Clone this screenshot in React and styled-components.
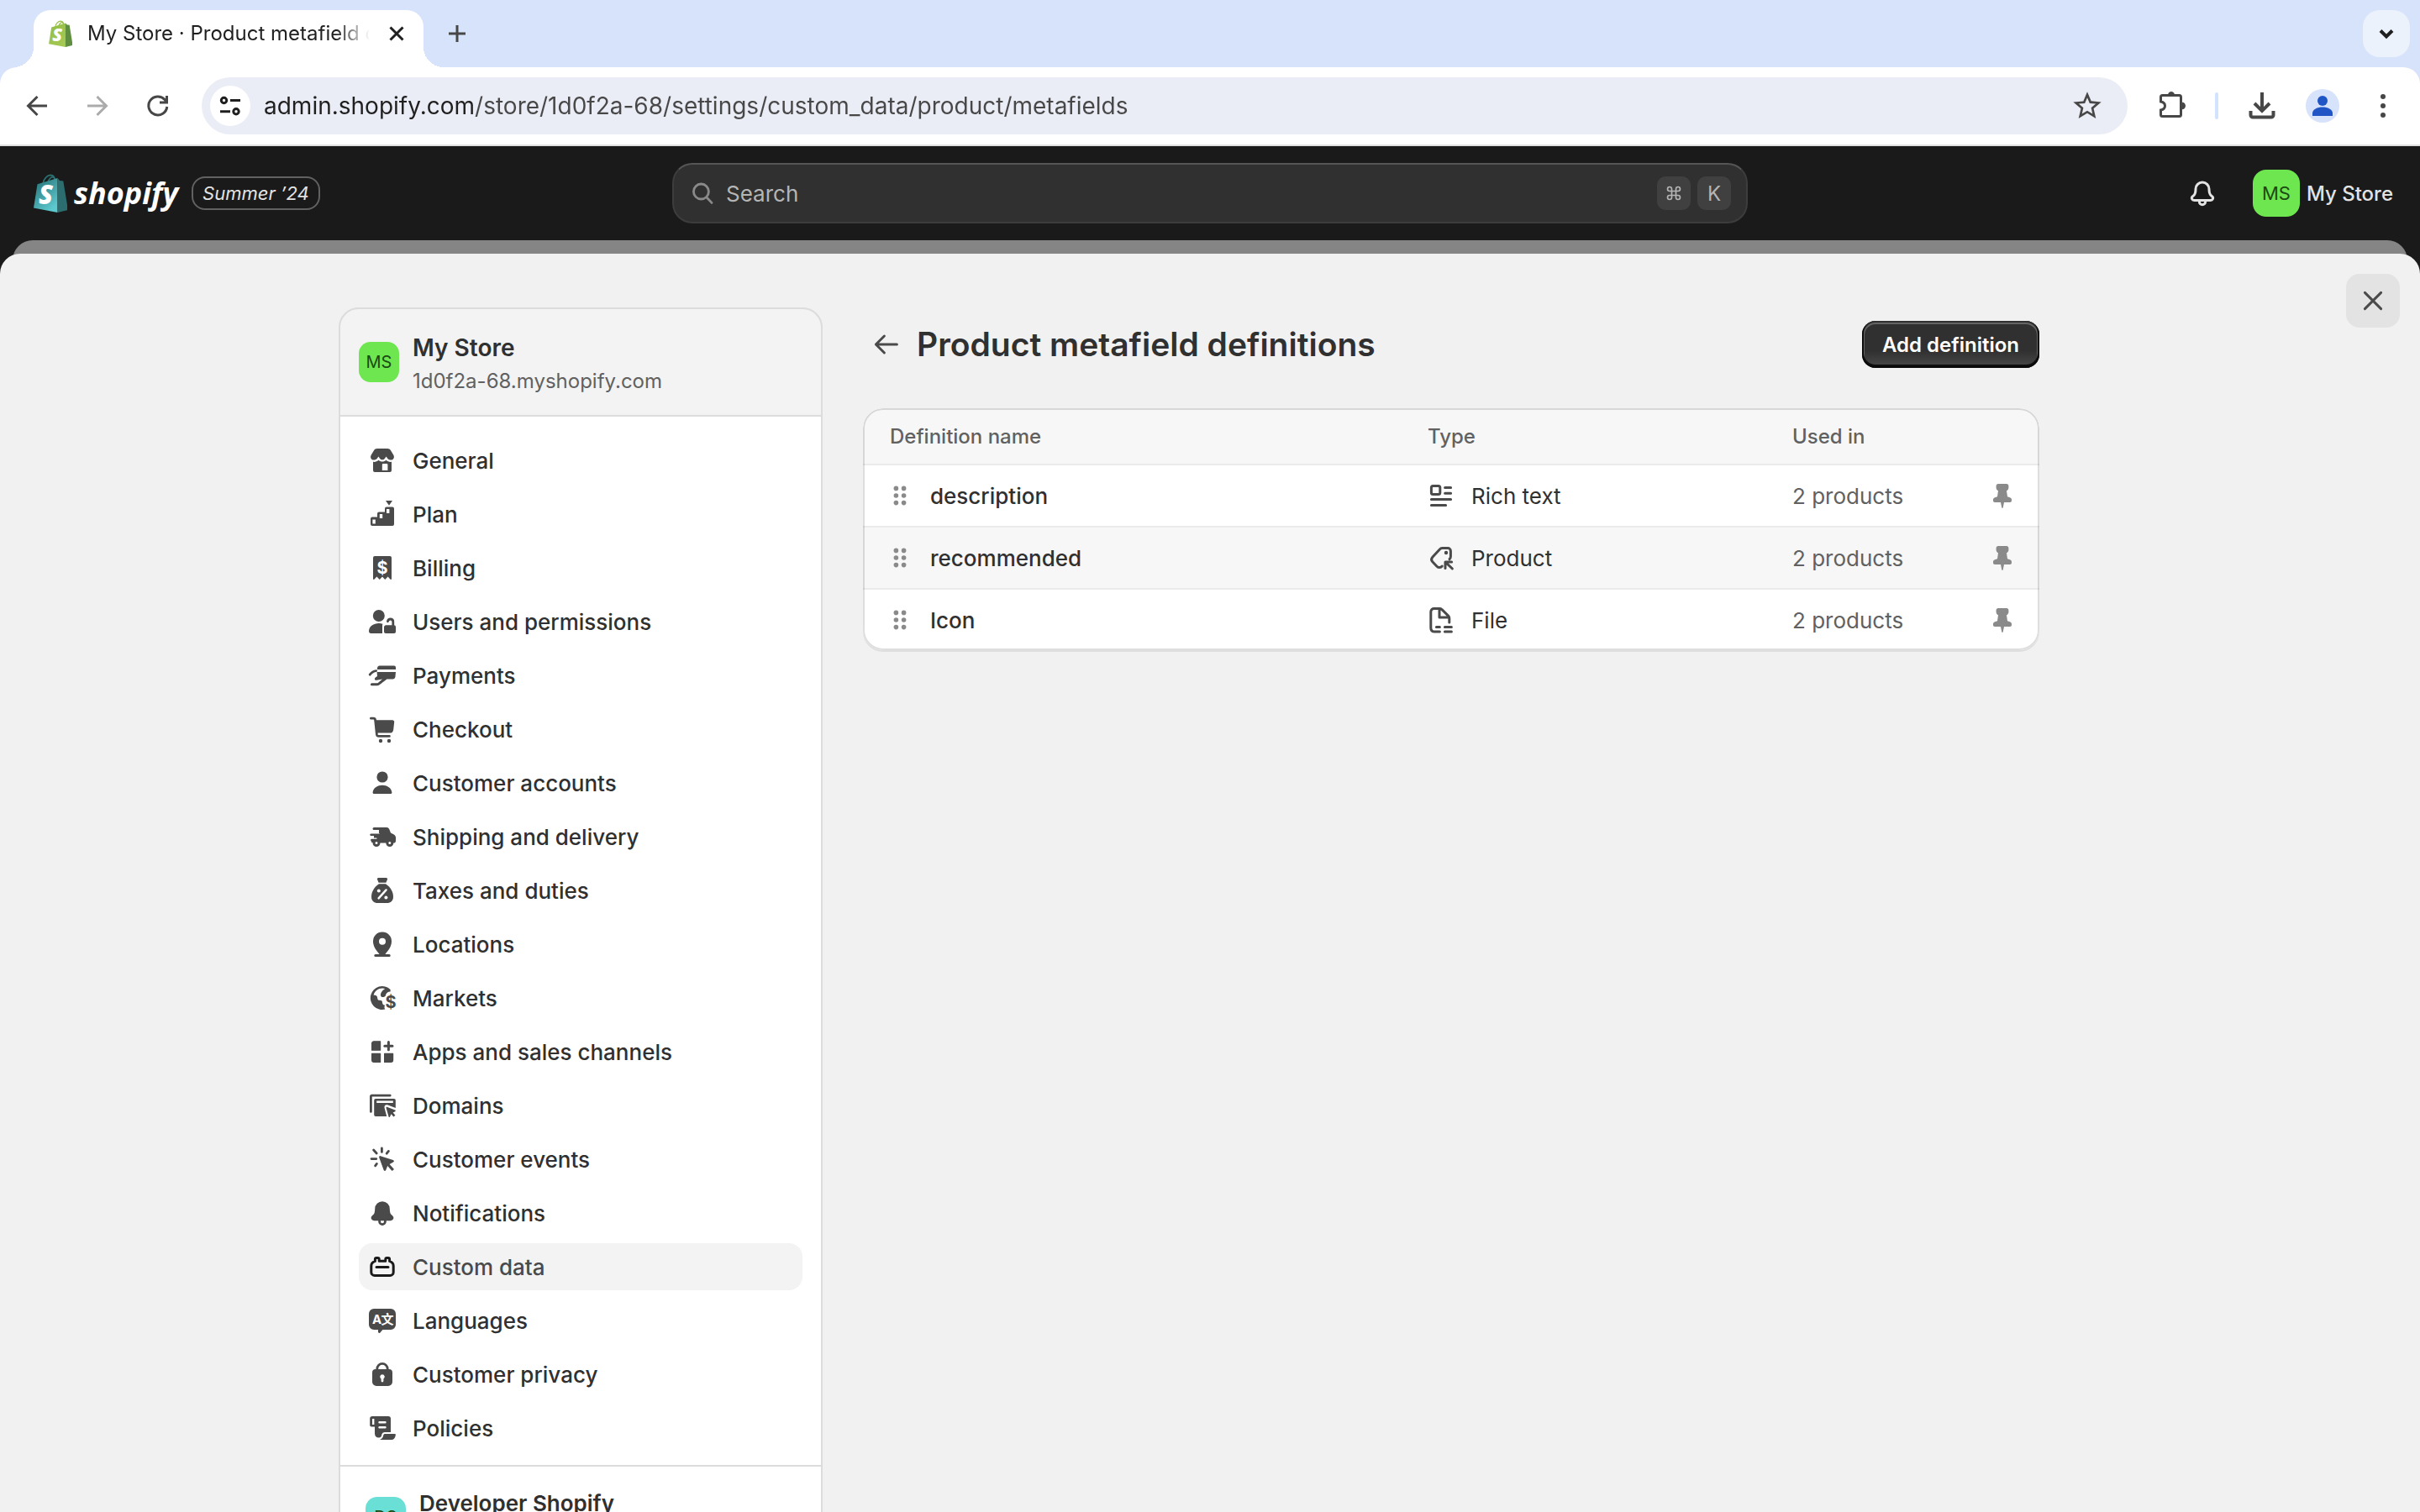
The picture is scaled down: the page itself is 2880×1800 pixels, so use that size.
import React, { useState } from 'react';
import styled, { createGlobalStyle } from 'styled-components';
import { Command } from 'lucide-react';
import { MdStarBorder } from 'react-icons/md';

const GlobalStyle = createGlobalStyle`
    * {
        box-sizing: border-box;
    }
    body {
        margin: 0;
        overflow: hidden;
        background-color: #1a1a1a;
        font-family: Inter, 'Liberation Sans', sans-serif;
        font-size: 26px;
        color: #303030;
    }
    button, input {
        font: inherit;
        color: inherit;
    }
    button {
        display: flex;
        align-items: center;
        justify-content: center;
        flex-shrink: 0;
        padding: 0;
        border: none;
        background: none;
        cursor: pointer;
    }
    a {
        color: inherit;
        text-decoration: none;
    }
    svg {
        display: block;
        flex-shrink: 0;
    }
`;

const Icon = ({ children, ...rest }) => (
    <svg width="40" height="40" viewBox="0 0 20 20" fill="currentColor" aria-hidden="true" {...rest}>
        {children}
    </svg>
);

const Line = ({ d, w = 1.5, color = 'currentColor' }) => (
    <path d={d} fill="none" stroke={color} strokeWidth={w} strokeLinecap="round" strokeLinejoin="round" />
);

// toolbar glyphs are drawn on a 40 unit grid
const Glyph = ({ children }) => (
    <svg width="40" height="40" viewBox="0 0 40 40" fill="none" stroke="currentColor" strokeWidth="3" aria-hidden="true">
        {children}
    </svg>
);

const Bag = ({ width, height, front, side, handle, id }) => (
    <svg width={width} height={height} viewBox="0 0 40 46" aria-hidden="true">
        <defs>
            <linearGradient id={id} x1="0" y1="0" x2="0.6" y2="1">
                <stop offset="0.2" stopColor={front[0]} />
                <stop offset="1" stopColor={front[1]} />
            </linearGradient>
        </defs>
        <path d="M11 12C12 5 17 1.500 20 1.500c4 0 5.500 4 5.500 8M17 10c1-4 4-6.500 6-6 3 .7 3 3.500 3 5" fill="none" stroke={handle} strokeWidth="1.800" />
        <path d="M4.500 12.300 28.500 5v41L0 40.500z" fill={`url(#${id})`} />
        <path d="M28.500 5l2.500 3 4.300.4L41 43l-12.500 3z" fill={side} />
        <text x="6" y="36" fontFamily="Open Sans" fontWeight="800" fontStyle="italic" fontSize="31" fill="#fff">S</text>
    </svg>
);

const BellShape = "M6 7.500a4 4 0 0 1 8 0c0 2 .4 3.200 1.100 3.800l.6.500c1.200 1 .5 2.400-.9 2.400H5.200c-1.400 0-2.100-1.400-.9-2.400l.6-.5C5.600 10.700 6 9.500 6 7.500z";

const icons = {
    General: (
        <>
            <path d="M7 3h6c.9 0 1.600.4 2 1.100l1.600 2.600c.9 1.500 0 3.100-1.500 3.100-.9 0-1.600-.4-2.100-1.100l-.7-1-.7 1c-.8 1.300-2.400 1.300-3.200 0l-.7-1-.7 1C6.500 9.400 5.800 9.800 4.900 9.800c-1.500 0-2.400-1.600-1.500-3.100L5 4.100C5.400 3.400 6.100 3 7 3z" />
            <path fillRule="evenodd" d="M4.500 10.900c1.200.2 2.300-.1 3.200-1 1.300 1.200 3.300 1.200 4.600 0 .9.900 2 1.200 3.200 1V16a1 1 0 0 1-1 1h-9a1 1 0 0 1-1-1zM10.500 12a.6.600 0 0 0-.6.600V16h3.300v-3.400a.6.600 0 0 0-.6-.6z" />
        </>
    ),
    Plan: (
        <>
            <path d="M12 2h4l-2 2.900z" />
            <path fillRule="evenodd" d="M3 12.800a1 1 0 0 1 1-1h3V9.700a1 1 0 0 1 1-1h3.500v-2a1 1 0 0 1 1-1H16a1 1 0 0 1 1 1V16a1 1 0 0 1-1 1H4a1 1 0 0 1-1-1zM4.200 13.200v2.500h1.700v-2.500zM8.400 10v2.500h1.700V10zM12.500 7v2.500h1.700V7z" />
        </>
    ),
    Billing: (
        <>
            <path d="M4.500 4a1 1 0 0 1 1-1h9a1 1 0 0 1 1 1v12.500c0 .5-.5.700-.8.300l-1.400-1.500-1.700 1.700-1.600-1.700L8.400 17l-1.700-1.700-1.400 1.500c-.3.400-.8.200-.8-.3z" />
            <text x="10" y="13.300" fontSize="10" fontWeight="700" textAnchor="middle" fill="#fff">$</text>
        </>
    ),
    'Users and permissions': (
        <>
            <circle cx="7.900" cy="6.500" r="3.500" />
            <path d="M2 15.800C2 12.700 5 11 7.800 11c1 0 1.700.1 2.400.4-.2.500-.2 1-.2 1.600v4H3.200C2.500 17 2 16.500 2 15.800z" />
            <path d="M12.200 12.100H17a1 1 0 0 1 1 1V16a1 1 0 0 1-1 1h-5a1 1 0 0 1-1-1v-2.700c0-.7.500-1.200 1.200-1.200z" />
            <Line d="M13.200 9.900c.2-1 .8-1.400 1.600-1.400 1 0 1.600.7 1.600 1.600V12" w="1.400" />
        </>
    ),
    Payments: (
        <>
            <path d="M8.300 4.200H17a1 1 0 0 1 1 1v1.300H6.900l.2-1.200c.1-.6.600-1.100 1.200-1.100zM6.800 8H18l-.3 3a1.400 1.400 0 0 1-1.400 1.200h-3.600C11 13.500 9.300 14.900 8.300 15.600c-.4.300-.9.500-1.500.5H3.700a.75.750 0 0 1 0-1.500h2.800c.5 0 .8-.1 1.200-.4l2.300-1.900-3.400.6c-1.300.2-1.500-1.200-.5-1.800L7 10.500z" />
            <Line d="M2.600 9.600C3.800 8 4.800 7.400 6.300 7.300" w="1.400" />
        </>
    ),
    Checkout: (
        <>
            <path d="M5.700 4.600H16c.7 0 1.100.5 1.100 1.100l-.5 4.500a2.300 2.300 0 0 1-2.300 2.100H6.400z" />
            <Line d="M3.200 3.600h1.500c.6 0 1 .3 1.100 1l.9 8.600c.1.700.4 1 1.100 1h6.400" w="1.400" />
            <circle cx="9" cy="17" r="1.100" />
            <circle cx="14" cy="17" r="1.100" />
        </>
    ),
    'Customer accounts': (
        <>
            <circle cx="10" cy="6.500" r="3.300" />
            <path d="M4.300 15.600c.4-2.700 3-4.200 5.700-4.200s5.300 1.500 5.700 4.200c.1.500-.3.900-.8.900H5.100c-.5 0-.9-.4-.8-.9z" />
        </>
    ),
    'Shipping and delivery': (
        <>
            <path d="M5 4.500h7.600c.7 0 1.200.4 1.500 1l.9 2.300 1.700.8c.8.400 1.300 1.100 1.300 2v1.900c0 .8-.5 1.300-1.300 1.300h-.4a2.100 2.100 0 0 0-3.900 0H8.500a2.200 2.200 0 0 0-4-.3H4l-.6-.3V12.200h3.300V10.700H5V9.500h3.500V8.100H8V6H5a.75.750 0 0 1 0-1.500z" />
            <Line d="M3.300 8.900h5M3.700 12h3" w="1.300" />
            <circle cx="6.500" cy="13.800" r="1.500" fill="#fff" stroke="currentColor" strokeWidth="1.500" />
            <circle cx="14.400" cy="13.800" r="1.500" fill="#fff" stroke="currentColor" strokeWidth="1.500" />
        </>
    ),
    'Taxes and duties': (
        <>
            <path d="M7.700 2.500h4.600c.6 0 .9.500.7 1l-.8 1.900H7.800L7 3.500c-.2-.5.100-1 .7-1z" />
            <path d="M8 6.100h4c2.700 1.700 4.500 4.700 4.500 7.600 0 2.300-1.500 3.800-3.800 3.800H7.300c-2.300 0-3.800-1.500-3.800-3.800 0-2.900 1.800-5.900 4.500-7.600z" />
            <Line d="M12.300 9.700l-4.500 5" w="1.200" color="#fff" />
            <circle cx="7.900" cy="10.300" r="1" fill="#fff" />
            <circle cx="12.200" cy="14.200" r="1" fill="#fff" />
        </>
    ),
    Locations: (
        <>
            <path fillRule="evenodd" d="M10 2.700a5.500 5.500 0 0 1 5.500 5.600c0 3-1.700 5.300-3.800 7.700h2.400a.75.750 0 0 1 0 1.500H5.900a.75.750 0 0 1 0-1.500h2.400C6.200 13.600 4.500 11.300 4.500 8.300A5.500 5.500 0 0 1 10 2.700zM10 6.400a2 2 0 1 0 0 4 2 2 0 0 0 0-4z" />
        </>
    ),
    Markets: (
        <>
            <path d="M14.800 5A7 7 0 1 0 11.700 16.800c-.4-.5-.6-1.100-.4-1.700l.2-.8c-.8 0-1.500-.6-1.500-1.600 0-1-.7-1.300-1.600-1.300-.8 0-1.300-.5-1.300-1.300C7.100 8.800 6 8.300 4.800 8.300 5.500 5.800 7.600 4.300 10 4.300c.6 0 1.100.1 1.600.2C10.300 5.300 9 6.800 9 8.200c0 1.200 1 1.500 2.100 1.200.7-.2.900-.8 1-1.400.3-1.100 1.300-1.700 2.700-1.800z" />
            <text x="15" y="15.800" fontSize="10" fontWeight="700" textAnchor="middle">$</text>
        </>
    ),
    'Apps and sales channels': (
        <>
            <path d="M5 3.900h3.800v5.200H3.800V5.100A1.200 1.200 0 0 1 5 3.900zM3.800 11.200h5v5H5a1.200 1.200 0 0 1-1.200-1.200zM11.300 11.200h5v3.800a1.200 1.200 0 0 1-1.200 1.200h-3.800z" strokeWidth=".6" stroke="currentColor" strokeLinejoin="round" />
            <Line d="M13.700 4.300v4.600M11.400 6.600H16" />
        </>
    ),
    Domains: (
        <>
            <Line d="M3.200 13.700V4.700c0-.4.200-.6.600-.6h10.800" w="1.400" />
            <path fillRule="evenodd" d="M6 6h11a.9.900 0 0 1 .9.900v4.600l-4.600-1.700c-1.400-.5-2.300.5-2 1.700l1.300 5H6a.9.900 0 0 1-.9-.9V6.900A.9.900 0 0 1 6 6zM6.600 7.300v1.200h9.800V7.300z" />
            <path d="M12.700 10.900l4.900 1.900c.4.200.4.600 0 .8l-1.300.6 1.400 1.700-1 .9-1.400-1.700-.8 1.700c-.2.400-.6.300-.7-.1l-1.500-5.200c-.1-.4.100-.7.400-.6z" />
        </>
    ),
    'Customer events': (
        <>
            <path d="M8.900 8.100l7.500 2.400c.7.200.7 1 .1 1.300l-2.200 1.200 2.700 3-1.200 1-2.700-3-1 2.500c-.3.700-1.100.6-1.300-.1L8.100 9c-.1-.6.300-1.100.8-.9z" />
            <Line d="M9.700 3.500v2.200M4.800 4.500l1.800 2M13.700 5.200l-1.100 1.400M3.500 9.800h2.900M6.700 12.700l-.9 1.200" w="1.400" />
        </>
    ),
    Notifications: (
        <>
            <path d={BellShape} stroke="currentColor" strokeWidth=".8" />
            <Line d="M8.300 14.500v.6a1.700 1.700 0 0 0 3.400 0v-.6" w="1.400" />
        </>
    ),
    'Custom data': (
        <Line d="M5.700 5.600c0-.5.300-.8.800-.8h.8c.5 0 .8.300.8.800v1h3.800v-1c0-.5.300-.8.800-.8h.8c.5 0 .8.300.8.800V6.700c1.200.4 2.300 1.400 2.300 2.800v3.700a2 2 0 0 1-2 2H5.400a2 2 0 0 1-2-2V9.500c0-1.400 1.100-2.400 2.300-2.800zM6.500 10.200h7" />
    ),
    Languages: (
        <>
            <path d="M5 3h10a3 3 0 0 1 3 3v6.500a3 3 0 0 1-3 3h-4.800l-1.500 1.700c-.4.500-1.200.2-1.200-.4v-1.300H5a3 3 0 0 1-3-3V6a3 3 0 0 1 3-3z" />
            <text x="4" y="11.800" fontSize="7.500" fontWeight="700" fill="#fff">A</text>
            <text x="9.200" y="12.200" fontSize="7.500" fontWeight="700" fontFamily="Noto Sans CJK SC, sans-serif" fill="#fff">文</text>
        </>
    ),
    'Customer privacy': (
        <>
            <path fillRule="evenodd" d="M6 7h8a2 2 0 0 1 2 2v5.500a2.500 2.500 0 0 1-2.500 2.500h-7A2.500 2.500 0 0 1 4 14.500V9a2 2 0 0 1 2-2zM10 10.100a1.400 1.400 0 0 0-.7 2.600V14a.7.700 0 0 0 1.400 0v-1.300a1.400 1.400 0 0 0-.7-2.600z" />
            <Line d="M6.900 8V6.800a3.100 3.100 0 0 1 6.200 0V8" w="1.400" />
        </>
    ),
    Policies: (
        <>
            <path fillRule="evenodd" d="M4 3h9.800A1.300 1.300 0 0 1 15 4.300v8.200H12c-1.800 0-2.200.8-2.400 1.800-.2.900-.7 1.500-1.600 1.500-1.600 0-2.500-1-2.500-2.600V9.300H3.500a.9.900 0 0 1-.9-.9V4.400C2.600 3.500 3.200 3 4 3zM4 4.500V8h1.200V4.500zM8.300 6a.65.650 0 0 0 0 1.300h3.400a.65.650 0 0 0 0-1.300zM8.300 9a.65.650 0 0 0 0 1.300h3.400a.65.650 0 0 0 0-1.300z" />
            <path d="M11.700 13.500h5.700c.4 0 .6.300.5.700-.3 1.700-1 2.800-2.800 2.800H8.500c1.300-.5 1.900-1.400 2.100-2.600.1-.6.500-.9 1.100-.9z" />
        </>
    ),
};

const typeIcons = {
    'Rich text': <Line d="M5.200 4.200h3.200c.6 0 1 .4 1 1v3.100c0 .6-.4 1-1 1H5.200c-.6 0-1-.4-1-1V5.200c0-.6.400-1 1-1zM12.300 5.200h3.500M12.300 8.600h3.500M4.200 12.200h11.600M4.200 15.700h8.600" />,
    Product: (
        <>
            <Line d="M15 10.800c.5-.5.700-1 .7-1.600V6A1.700 1.700 0 0 0 14 4.300h-3.400c-.5 0-1 .2-1.300.6L4.900 9.600c-.8.900-.8 1.900 0 2.800l2.600 2.700c1 1 2.300.9 3.100-.1M12.500 16.200v-3.700h3.800M12.800 12.800l3.900 3.700" />
            <circle cx="13" cy="7" r="1.100" />
        </>
    ),
    File: <Line d="M6.200 17c-1.400 0-2.300-.9-2.300-2.300V5.200C3.900 4 4.700 3.300 5.800 3.300h3.400c.5 0 .9.200 1.300.5l3.900 3.900c.4.400.5.800.5 1.300v2.500M9 3.700v4.800h5.200M7.200 14.200h2M12.200 14.200h4M6.200 17h3M12.200 17h4" />,
};

const definitions = [
    { name: 'description', type: 'Rich text', used: '2 products' },
    { name: 'recommended', type: 'Product', used: '2 products' },
    { name: 'Icon', type: 'File', used: '2 products' },
];

const BrowserChrome = () => (
    <header>
        <TabStrip>
            <Tab>
                <Favicon><Bag id="fav" width="28" height="32" front={['#95bf47', '#a4c955']} side="#5e8e3e" handle="#95bf47" /></Favicon>
                <TabTitle>My Store · Product metafield definitions</TabTitle>
                <SmallButton aria-label="Close tab">
                    <Glyph><path d="M12.500 12.500l15 15M27.500 12.500l-15 15" /></Glyph>
                </SmallButton>
            </Tab>
            <NewTab aria-label="New tab">
                <Glyph><path d="M20 10v20M10 20h20" /></Glyph>
            </NewTab>
            <TabSearch aria-label="Search tabs">
                <Glyph><path d="M13 16.500l7 7 7-7" strokeWidth="4" /></Glyph>
            </TabSearch>
        </TabStrip>
        <Toolbar>
            <button aria-label="Back"><Glyph><path d="M20.500 9L9.500 20l11 11M10 20h22" /></Glyph></button>
            <Muted aria-label="Forward"><Glyph><path d="M19.500 9l11 11-11 11M30 20H8" /></Glyph></Muted>
            <button aria-label="Reload"><Glyph><path d="M30.800 21A11 11 0 1 1 28 12.500l2 3M30.500 8v8H22" /></Glyph></button>
            <AddressBar>
                <SiteInfo aria-label="View site information">
                    <Glyph>
                        <circle cx="12.500" cy="13.500" r="3.200" />
                        <circle cx="27" cy="26.700" r="3.200" />
                        <path d="M20 13.500h12M8 26.700h12" />
                    </Glyph>
                </SiteInfo>
                <Url aria-label="Address" defaultValue="admin.shopify.com/store/1d0f2a-68/settings/custom_data/product/metafields" />
                <button aria-label="Bookmark this page"><MdStarBorder size={40} /></button>
            </AddressBar>
            <button aria-label="Extensions">
                <Glyph>
                    <path d="M9.500 7.500h20a2 2 0 0 1 2 2v21a2 2 0 0 1-2 2h-20a2 2 0 0 1-2-2V25c3-.5 5-2.400 5-5s-2-4.500-5-5V9.500a2 2 0 0 1 2-2z" />
                    <path d="M16.500 7a3.500 3.500 0 0 1 7 0zM32.500 16a4 4 0 0 1 0 8z" fill="currentColor" strokeWidth="1" />
                </Glyph>
            </button>
            <Divider />
            <button aria-label="Downloads">
                <Glyph><path d="M20 4v21M11 17l9 9 9-9M6.500 26v5a2.500 2.500 0 0 0 2.500 2.500h22a2.500 2.500 0 0 0 2.500-2.500v-5" strokeWidth="4" /></Glyph>
            </button>
            <Profile aria-label="Profile">
                <Glyph>
                    <circle cx="20" cy="14" r="6" fill="currentColor" stroke="none" />
                    <path d="M8 32v-3c0-5 6-7.500 12-7.500s12 2.500 12 7.500v3z" fill="currentColor" stroke="none" />
                </Glyph>
            </Profile>
            <button aria-label="Menu">
                <Glyph>
                    {[9, 20, 31].map((y) => <circle key={y} cx="20" cy={y} r="3" fill="currentColor" stroke="none" />)}
                </Glyph>
            </button>
        </Toolbar>
    </header>
);

const Settings = () => {
    const [active, setActive] = useState('Custom data');

    return (
        <Sidebar>
            <StoreInfo>
                <Avatar>MS</Avatar>
                <StoreText>
                    <StoreName>My Store</StoreName>
                    <StoreUrl>1d0f2a-68.myshopify.com</StoreUrl>
                </StoreText>
            </StoreInfo>
            <Nav aria-label="Settings">
                {Object.keys(icons).map((name) => (
                    <NavItem key={name} href="#" $active={name === active} onClick={() => setActive(name)}>
                        <Icon>{icons[name]}</Icon>
                        {name}
                    </NavItem>
                ))}
            </Nav>
            <Account>
                <Avatar $color="#6adfd6">DS</Avatar>
                <AccountName>Developer Shopify</AccountName>
            </Account>
        </Sidebar>
    );
};

const Definitions = () => (
    <Main>
        <TitleRow>
            <a href="#" aria-label="Back to custom data">
                <Icon><Line d="M16.200 10H4M8.700 5l-5 5 5 5" /></Icon>
            </a>
            <h1>Product metafield definitions</h1>
            <AddButton>Add definition</AddButton>
        </TitleRow>
        <Card>
            <Table>
                <thead>
                    <tr>
                        <th scope="col">Definition name</th>
                        <TypeHead scope="col">Type</TypeHead>
                        <UsedHead scope="col">Used in</UsedHead>
                        <PinHead aria-label="Pinned" />
                    </tr>
                </thead>
                <tbody>
                    {definitions.map(({ name, type, used }) => (
                        <tr key={name}>
                            <td>
                                <Cell $strong>
                                    <Handle>
                                        {[5.7, 10, 14.3].map((y) => (
                                            <React.Fragment key={y}>
                                                <circle cx="7.700" cy={y} r="1.400" />
                                                <circle cx="12.300" cy={y} r="1.400" />
                                            </React.Fragment>
                                        ))}
                                    </Handle>
                                    {name}
                                </Cell>
                            </td>
                            <td>
                                <Cell>
                                    <TypeIcon>{typeIcons[type]}</TypeIcon>
                                    {type}
                                </Cell>
                            </td>
                            <Used>{used}</Used>
                            <td>
                                <PinButton aria-label={`Unpin ${name}`}>
                                    <Icon>
                                        <path d="M7.500 3h5c.7 0 1.200.5 1.200 1.200v1c0 .9-.5 1.600-1.200 1.900l.5 3.500 1.500.5c.6.200 1 .7 1 1.300v.6c0 .6-.4 1-1 1h-3.500l-.6 3c-.1.600-.7.600-.8 0L9 14H5.500c-.6 0-1-.4-1-1v-.6c0-.6.4-1.100 1-1.300l1.500-.5.500-3.500c-.7-.3-1.200-1-1.200-1.900v-1C6.300 3.500 6.800 3 7.500 3z" />
                                    </Icon>
                                </PinButton>
                            </td>
                        </tr>
                    ))}
                </tbody>
            </Table>
        </Card>
    </Main>
);

const App = () => (
    <Page>
        <GlobalStyle />
        <BrowserChrome />
        <TopBar>
            <Brand>
                <Bag id="logo" width="40" height="46" front={['#2f7f83', '#5cc9cf']} side="#2c6e70" handle="#2c6e70" />
                <Wordmark>shopify</Wordmark>
                <Edition>Summer ’24</Edition>
            </Brand>
            <Search>
                <Icon><Line d="M13.700 9a4.500 4.500 0 1 1-9 0 4.500 4.500 0 0 1 9 0zM12.500 12.500l3 3.200" w="1.400" /></Icon>
                <input type="search" placeholder="Search" aria-label="Search" />
                <kbd><Command size={20} strokeWidth={2} /></kbd>
                <kbd>K</kbd>
            </Search>
            <Actions>
                <button aria-label="Notifications">
                    <Icon>
                        <Line d={BellShape} />
                        <Line d="M8.200 14.500v.6a1.800 1.800 0 0 0 3.600 0v-.6" />
                    </Icon>
                </button>
                <StoreButton>
                    <Avatar $large>MS</Avatar>
                    My Store
                </StoreButton>
            </Actions>
        </TopBar>
        <Behind />
        <Sheet>
            <CloseButton aria-label="Close settings">
                <Icon><Line d="M5.200 5.200l9.600 9.600M14.800 5.200l-9.600 9.600" /></Icon>
            </CloseButton>
            <Content>
                <Settings />
                <Definitions />
            </Content>
        </Sheet>
    </Page>
);

const Page = styled.div`
    height: 100vh;
    display: flex;
    flex-direction: column;
    overflow: hidden;
`;

const TabStrip = styled.div`
    display: flex;
    align-items: flex-end;
    height: 80px;
    padding: 0 12px 0 40px;
    background-color: #d7e2fb;
`;

const Tab = styled.div`
    position: relative;
    display: flex;
    align-items: center;
    gap: 16px;
    width: 464px;
    height: 68px;
    padding: 0 16px 12px;
    border-radius: 20px 20px 0 0;
    background-color: white;
    color: #1f1f1f;

    &:before, &:after {
        content: '';
        position: absolute;
        bottom: 0;
        width: 24px;
        height: 24px;
    }
    &:before {
        right: 100%;
        background: radial-gradient(circle at 0 0, transparent 24px, white 24px);
    }
    &:after {
        left: 100%;
        background: radial-gradient(circle at 100% 0, transparent 24px, white 24px);
    }
`;

const Favicon = styled.span`
    display: flex;
    justify-content: center;
    width: 32px;
`;

const TabTitle = styled.span`
    flex: 1;
    min-width: 0;
    overflow: hidden;
    white-space: nowrap;
    font-size: 24px;
    line-height: 32px;
    mask-image: linear-gradient(90deg, black 88%, transparent);
`;

const SmallButton = styled.button`
    width: 32px;
    height: 32px;
`;

const NewTab = styled.button`
    width: 32px;
    height: 32px;
    margin: 0 auto 24px 24px;
    color: #474747;
`;

const TabSearch = styled.button`
    width: 56px;
    height: 56px;
    margin-bottom: 12px;
    border-radius: 20px;
    background-color: #ebf2fc;
    color: #1f1f1f;
`;

const Toolbar = styled.div`
    display: flex;
    align-items: center;
    gap: 32px;
    height: 94px;
    padding: 0 24px;
    border-bottom: 2px solid #dfe0e0;
    border-radius: 20px 20px 0 0;
    background-color: white;
    box-shadow: 0 -20px 0 #d7e2fb;
    clip-path: inset(0);
    color: #474747;
`;

const Muted = styled.button`
    color: #ababab;
`;

const AddressBar = styled.div`
    flex: 1;
    display: flex;
    align-items: center;
    gap: 16px;
    height: 68px;
    padding: 0 28px 0 10px;
    border-radius: 34px;
    background-color: #ebedf6;
`;

const SiteInfo = styled.button`
    width: 48px;
    height: 48px;
    border-radius: 50%;
    background-color: white;
    color: #1f1f1f;
`;

const Url = styled.input`
    flex: 1;
    min-width: 0;
    padding: 0;
    border: none;
    outline: none;
    font-size: 28px;
    line-height: 40px;
    /* host is darker than the path */
    background: linear-gradient(90deg, #1f1f1f 250px, #474747 250px);
    background-clip: text;
    -webkit-text-fill-color: transparent;
`;

const Divider = styled.span`
    width: 4px;
    height: 32px;
    border-radius: 2px;
    background-color: #d3e3fd;
`;

const Profile = styled.button`
    border-radius: 50%;
    background-color: #d7e2fb;
    color: #1f55c4;
`;

const TopBar = styled.div`
    display: grid;
    grid-template-columns: 1fr minmax(0, 1280px) 1fr;
    align-items: center;
    flex-shrink: 0;
    height: 112px;
    padding: 0 32px;
    color: #e3e3e3;
`;

const Brand = styled.div`
    display: flex;
    align-items: center;
    gap: 8px;
    padding-left: 8px;
`;

const Wordmark = styled.span`
    font-family: 'Open Sans', sans-serif;
    font-size: 36px;
    line-height: 40px;
    font-weight: 700;
    font-style: italic;
    color: white;
`;

const Edition = styled.span`
    margin-left: 8px;
    padding: 0 11px;
    border: 2px solid #616161;
    border-radius: 16px;
    font-size: 22px;
    line-height: 36px;
    font-style: italic;
`;

const Search = styled.label`
    display: flex;
    align-items: center;
    gap: 8px;
    height: 72px;
    padding: 0 18px 0 14px;
    border: 2px solid #3d3d3d;
    border-top-color: #555;
    border-radius: 24px;
    background-color: #303030;
    color: #8a8a8a;

    input {
        flex: 1;
        min-width: 0;
        padding: 0;
        border: none;
        outline: none;
        background: none;
    }
    input::placeholder {
        color: #b5b5b5;
        opacity: 1;
    }
    kbd {
        display: flex;
        align-items: center;
        justify-content: center;
        width: 40px;
        height: 40px;
        border-radius: 10px;
        background-color: #404040;
        color: #b5b5b5;
        font-family: inherit;
        font-size: 24px;
    }
`;

const Actions = styled.div`
    display: flex;
    align-items: center;
    justify-content: flex-end;
    gap: 40px;
`;

const StoreButton = styled.button`
    gap: 8px;
    font-size: 24px;
    font-weight: 500;
`;

const Avatar = styled.span`
    display: flex;
    align-items: center;
    justify-content: center;
    flex-shrink: 0;
    width: ${({ $large }) => ($large ? 56 : 48)}px;
    height: ${({ $large }) => ($large ? 56 : 48)}px;
    border-radius: ${({ $large }) => ($large ? 16 : 14)}px;
    background-color: ${({ $color }) => $color || '#6ee650'};
    color: #1b4a12;
    font-size: ${({ $large }) => ($large ? 22 : 20)}px;
    font-weight: 400;
`;

const Behind = styled.div`
    flex-shrink: 0;
    height: 28px;
    margin: 0 15px -12px;
    border-radius: 24px 24px 0 0;
    background-color: #858585;
`;

const Sheet = styled.div`
    position: relative;
    flex: 1;
    min-height: 0;
    overflow: hidden;
    padding: 64px 50px 0 0;
    border-radius: 24px 24px 0 0;
    background-color: #f1f1f1;
`;

const CloseButton = styled.button`
    position: absolute;
    top: 24px;
    right: 24px;
    width: 64px;
    height: 64px;
    border-radius: 16px;
    background-color: #e3e3e3;
    color: #4a4a4a;
`;

const Content = styled.div`
    display: flex;
    align-items: flex-start;
    gap: 48px;
    max-width: 2024px;
    margin: 0 auto;
`;

const Sidebar = styled.aside`
    flex-shrink: 0;
    width: 576px;
    border-radius: 24px;
    background-color: white;
    box-shadow: inset 0 0 0 2px #dcdcdc;
`;

const StoreInfo = styled.div`
    display: flex;
    align-items: center;
    gap: 16px;
    height: 130px;
    padding: 0 22px;
    border: 2px solid #dcdcdc;
    border-radius: 24px 24px 0 0;
    background-color: #f3f3f3;
`;

const StoreText = styled.div`
    padding-top: 6px;
`;

const StoreName = styled.div`
    font-size: 28px;
    line-height: 40px;
    font-weight: 600;
`;

const StoreUrl = styled.div`
    font-size: 24px;
    line-height: 40px;
    color: #616161;
`;

const Nav = styled.nav`
    display: flex;
    flex-direction: column;
    gap: 8px;
    padding: 24px 24px 16px;
`;

const NavItem = styled.a`
    display: flex;
    align-items: center;
    gap: 16px;
    height: 56px;
    padding: 0 8px;
    border-radius: 16px;
    font-weight: 550;
    color: ${({ $active }) => ($active ? '#4a4a4a' : '#303030')};
    background-color: ${({ $active }) => ($active ? '#f3f3f3' : 'transparent')};

    svg {
        color: ${({ $active }) => ($active ? '#1a1a1a' : '#4a4a4a')};
    }
`;

const Account = styled.div`
    display: flex;
    align-items: center;
    gap: 16px;
    padding: 24px 32px;
    border-top: 2px solid #dcdcdc;
`;

const AccountName = styled.div`
    min-height: 72px;
    line-height: 40px;
    font-weight: 600;
`;

const Main = styled.main`
    flex: 1;
    min-width: 0;
    padding-top: 16px;
`;

const TitleRow = styled.div`
    display: flex;
    align-items: center;
    gap: 16px;
    margin-bottom: 48px;
    padding-left: 8px;

    a {
        color: #4a4a4a;
    }
    h1 {
        flex: 1;
        margin: 0;
        font-size: 39px;
        line-height: 48px;
        font-weight: 600;
    }
`;

const AddButton = styled.button`
    height: 56px;
    padding: 0 24px;
    border-radius: 16px;
    background: linear-gradient(180deg, #303030 63%, #4a4a4a);
    box-shadow: inset 0 -2px 0 2px rgba(0, 0, 0, 0.8), inset 0 0 0 2px #303030, inset 0 1px 0 3px rgba(255, 255, 255, 0.25);
    color: white;
    font-size: 24px;
    font-weight: 600;
`;

const Card = styled.div`
    position: relative;
    overflow: hidden;
    border-radius: 24px;
    background-color: white;
    box-shadow: 0 2px 0 #dedede;

    /* outline sits over the row backgrounds */
    &:after {
        content: '';
        position: absolute;
        inset: 0;
        border: 2px solid rgba(0, 0, 0, 0.13);
        border-radius: 24px;
        pointer-events: none;
    }
`;

const Table = styled.table`
    width: 100%;
    table-layout: fixed;
    border-spacing: 0;

    th {
        height: 68px;
        padding: 0 32px;
        border-bottom: 2px solid #ebebeb;
        background-color: #f7f7f7;
        color: #616161;
        font-size: 24px;
        font-weight: 550;
        text-align: left;
    }
    td {
        height: 74px;
        padding: 0;
        border-bottom: 2px solid #ebebeb;
    }
    tbody tr:nth-child(2) {
        background-color: #f7f7f7;
    }
    tbody tr:last-child td {
        height: 72px;
        border-bottom: none;
    }
`;

const TypeHead = styled.th`
    width: 434px;
`;

const UsedHead = styled.th`
    width: 220px;
`;

const PinHead = styled.th`
    width: 106px;
`;

const Cell = styled.div`
    display: flex;
    align-items: center;
    gap: 16px;
    padding-left: ${({ $strong }) => ($strong ? 24 : 28)}px;
    font-weight: ${({ $strong }) => ($strong ? 550 : 400)};
`;

const Handle = styled(Icon)`
    color: #8a8a8a;
    cursor: grab;
`;

const TypeIcon = styled(Icon)`
    color: #4a4a4a;
`;

const Used = styled.td`
    && {
        padding-left: 32px;
    }
    color: #616161;
    white-space: nowrap;
`;

const PinButton = styled.button`
    margin-left: auto;
    margin-right: 24px;
    color: #8a8a8a;
`;

export default App;
